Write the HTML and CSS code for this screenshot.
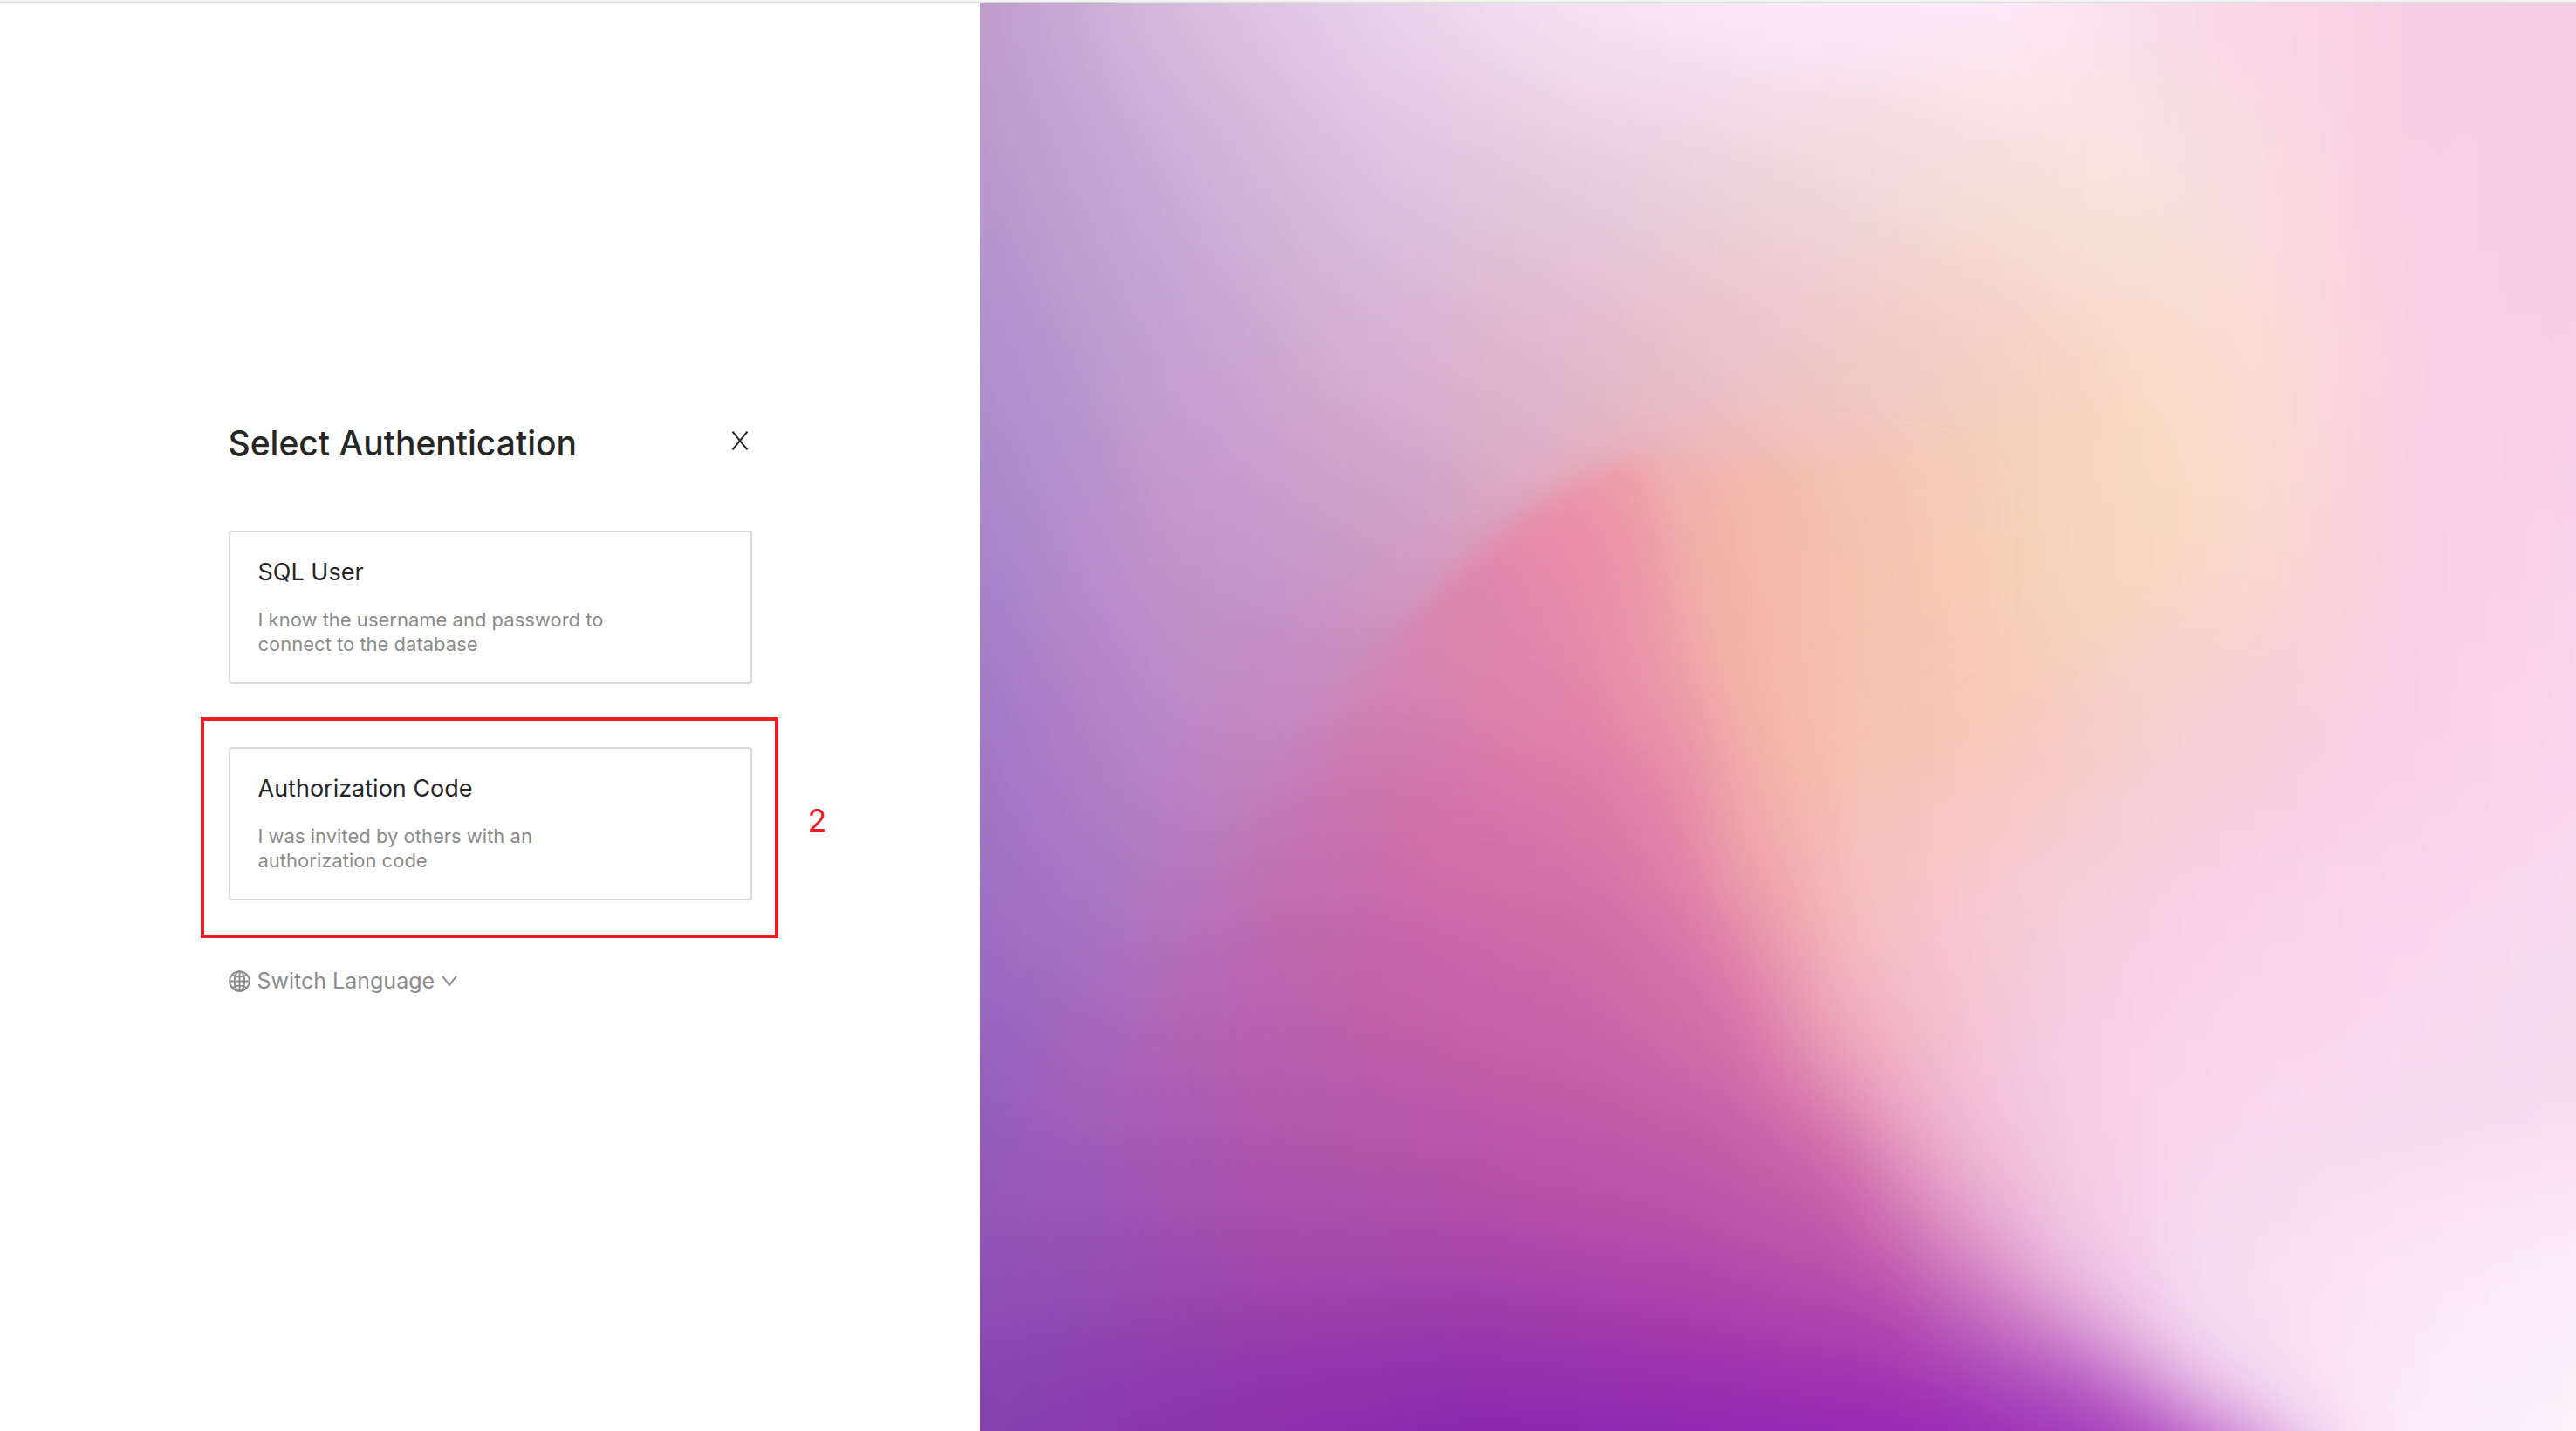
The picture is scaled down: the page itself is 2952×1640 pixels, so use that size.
FILE: index.html
```html
<!DOCTYPE html>
<html lang="en">
<head>
<meta charset="utf-8">
<title>Select Authentication</title>
<link rel="stylesheet" href="styles.css">
</head>
<body>
<div class="window-edge"></div>
<div class="page">
  <main class="panel">
    <div class="auth">
      <header class="auth-header">
        <h1 class="auth-title">Select Authentication</h1>
        <button class="close" type="button" aria-label="Close">
          <svg class="close-icon" viewBox="0 0 20 22" aria-hidden="true"><path d="M1.5 .5 18.5 21.5M18.5 .5 1.5 21.5"/></svg>
        </button>
      </header>
      <div class="options">
        <button class="card" type="button">
          <span class="card-title">SQL User</span>
          <span class="card-text">I know the username and password to connect to the database</span>
        </button>
        <div class="marked">
          <button class="card" type="button">
            <span class="card-title">Authorization Code</span>
            <span class="card-text">I was invited by others with an authorization code</span>
          </button>
          <div class="marker"></div>
          <span class="marker-label">2</span>
        </div>
      </div>
      <button class="language" type="button">
        <svg class="globe" viewBox="0 0 26 26" aria-hidden="true"><circle cx="13" cy="13" r="11.8"/><ellipse cx="13" cy="13" rx="6" ry="11.8"/><path d="M13 1v24M1 13h24M4.200 5.200Q13 10.500 21.800 5.200M4.200 20.800Q13 15.500 21.800 20.800"/></svg>
        <span>Switch Language</span>
        <svg class="chevron" viewBox="0 0 18 12" aria-hidden="true"><path d="M1 .7 9 11 17 .7"/></svg>
      </button>
    </div>
  </main>
  <aside class="artwork">
    <svg class="art" viewBox="19 4 1549 1564" preserveAspectRatio="none" aria-hidden="true">
      <defs>
        <filter id="rows" filterUnits="userSpaceOnUse" x="-300" y="-400" width="2200" height="2400" color-interpolation-filters="sRGB"><feGaussianBlur stdDeviation="20 75"/></filter>
        <filter id="petalRows" filterUnits="userSpaceOnUse" x="-300" y="-400" width="2200" height="2400" color-interpolation-filters="sRGB"><feGaussianBlur stdDeviation="15 65"/></filter>
        <filter id="crisp" filterUnits="userSpaceOnUse" x="-300" y="-400" width="2200" height="2400"><feGaussianBlur stdDeviation="15"/></filter>
        <filter id="haze" filterUnits="userSpaceOnUse" x="-300" y="-400" width="2200" height="2400"><feGaussianBlur stdDeviation="26"/></filter>
        <filter id="soft" filterUnits="userSpaceOnUse" x="-300" y="-400" width="2200" height="2400"><feGaussianBlur stdDeviation="50"/></filter>
        <linearGradient id="b0" gradientUnits="userSpaceOnUse" x1="0" x2="1600" y1="0" y2="0"><stop offset="0.01" stop-color="#c09bcb"/><stop offset="0.125" stop-color="#d5bbde"/><stop offset="0.25" stop-color="#e8d2ea"/><stop offset="0.375" stop-color="#f6e4f6"/><stop offset="0.5" stop-color="#fceafb"/><stop offset="0.64" stop-color="#fdeaf8"/><stop offset="0.75" stop-color="#f9d8e8"/><stop offset="0.9" stop-color="#f6cfe1"/><stop offset="0.98" stop-color="#f5cee6"/></linearGradient>
        <linearGradient id="b1" gradientUnits="userSpaceOnUse" x1="0" x2="1600" y1="0" y2="0"><stop offset="0.01" stop-color="#b797cc"/><stop offset="0.125" stop-color="#cbabd6"/><stop offset="0.25" stop-color="#dcc0de"/><stop offset="0.375" stop-color="#e5cbdc"/><stop offset="0.5" stop-color="#eed5da"/><stop offset="0.625" stop-color="#f6dfd9"/><stop offset="0.7" stop-color="#f9e5de"/><stop offset="0.77" stop-color="#fadfe2"/><stop offset="0.86" stop-color="#f7d1e2"/><stop offset="0.98" stop-color="#f5cee6"/></linearGradient>
        <linearGradient id="b2" gradientUnits="userSpaceOnUse" x1="0" x2="1600" y1="0" y2="0"><stop offset="0.01" stop-color="#ad8fcd"/><stop offset="0.125" stop-color="#c4a0d0"/><stop offset="0.25" stop-color="#d5b0d2"/><stop offset="0.375" stop-color="#e1b9cb"/><stop offset="0.5" stop-color="#edc5c9"/><stop offset="0.625" stop-color="#f3cfc2"/><stop offset="0.73" stop-color="#f8dbc8"/><stop offset="0.78" stop-color="#f9ddd1"/><stop offset="0.86" stop-color="#f8d3e1"/><stop offset="0.98" stop-color="#f6cfe9"/></linearGradient>
        <linearGradient id="b3" gradientUnits="userSpaceOnUse" x1="0" x2="1600" y1="0" y2="0"><stop offset="0.01" stop-color="#a784cb"/><stop offset="0.125" stop-color="#c195cb"/><stop offset="0.25" stop-color="#cc9bc6"/><stop offset="0.34" stop-color="#dba5be"/><stop offset="0.45" stop-color="#f0b0ac"/><stop offset="0.5" stop-color="#f4bbaa"/><stop offset="0.625" stop-color="#f6cfb5"/><stop offset="0.7" stop-color="#f6d9bc"/><stop offset="0.78" stop-color="#f7d9cb"/><stop offset="0.875" stop-color="#f7d0e2"/><stop offset="0.98" stop-color="#f7d2ec"/></linearGradient>
        <linearGradient id="b4" gradientUnits="userSpaceOnUse" x1="0" x2="1600" y1="0" y2="0"><stop offset="0.01" stop-color="#a078c6"/><stop offset="0.125" stop-color="#bb87c6"/><stop offset="0.24" stop-color="#c98abe"/><stop offset="0.45" stop-color="#f3a8a8"/><stop offset="0.5" stop-color="#f5bcac"/><stop offset="0.625" stop-color="#f6c9b9"/><stop offset="0.75" stop-color="#f6cfd4"/><stop offset="0.875" stop-color="#f7d0e6"/><stop offset="0.98" stop-color="#f8d5ee"/></linearGradient>
        <linearGradient id="b5" gradientUnits="userSpaceOnUse" x1="0" x2="1600" y1="0" y2="0"><stop offset="0.01" stop-color="#9c6fc4"/><stop offset="0.1" stop-color="#ac77c1"/><stop offset="0.25" stop-color="#c476b3"/><stop offset="0.49" stop-color="#f2a9ad"/><stop offset="0.54" stop-color="#f5bfc0"/><stop offset="0.625" stop-color="#f6cad4"/><stop offset="0.75" stop-color="#f7d1e6"/><stop offset="0.875" stop-color="#f8d6ef"/><stop offset="0.98" stop-color="#f8daf1"/></linearGradient>
        <linearGradient id="b6" gradientUnits="userSpaceOnUse" x1="0" x2="1600" y1="0" y2="0"><stop offset="0.01" stop-color="#945fbf"/><stop offset="0.1" stop-color="#a563b9"/><stop offset="0.3" stop-color="#c066a8"/><stop offset="0.55" stop-color="#f0adc4"/><stop offset="0.625" stop-color="#f3c4d9"/><stop offset="0.7" stop-color="#f7d2e9"/><stop offset="0.8" stop-color="#f9d8f0"/><stop offset="0.98" stop-color="#f7dcf2"/></linearGradient>
        <linearGradient id="b7" gradientUnits="userSpaceOnUse" x1="0" x2="1600" y1="0" y2="0"><stop offset="0.01" stop-color="#8c53b9"/><stop offset="0.2" stop-color="#a04aae"/><stop offset="0.5" stop-color="#c867b0"/><stop offset="0.66" stop-color="#efc0e0"/><stop offset="0.75" stop-color="#f7dcf2"/><stop offset="0.875" stop-color="#fae6f7"/><stop offset="0.98" stop-color="#fcedf9"/></linearGradient>
        <linearGradient id="b8" gradientUnits="userSpaceOnUse" x1="0" x2="1600" y1="0" y2="0"><stop offset="0.01" stop-color="#853fab"/><stop offset="0.3" stop-color="#8c26ae"/><stop offset="0.55" stop-color="#9c35b5"/><stop offset="0.75" stop-color="#f0d2ee"/><stop offset="0.82" stop-color="#f9e3f5"/><stop offset="0.9" stop-color="#fceef9"/><stop offset="0.98" stop-color="#fdf2fa"/></linearGradient>
        <linearGradient id="p0" gradientUnits="userSpaceOnUse" x1="0" x2="1600" y1="0" y2="0"><stop offset="0.3" stop-color="#e18fb0"/><stop offset="0.37" stop-color="#ec94aa"/><stop offset="0.43" stop-color="#f1a6a8"/></linearGradient>
        <linearGradient id="p1" gradientUnits="userSpaceOnUse" x1="0" x2="1600" y1="0" y2="0"><stop offset="0.25" stop-color="#d384b0"/><stop offset="0.31" stop-color="#df80aa"/><stop offset="0.38" stop-color="#e686a8"/><stop offset="0.44" stop-color="#f09da8"/></linearGradient>
        <linearGradient id="p2" gradientUnits="userSpaceOnUse" x1="0" x2="1600" y1="0" y2="0"><stop offset="0.18" stop-color="#c272b0"/><stop offset="0.28" stop-color="#d071a9"/><stop offset="0.38" stop-color="#da76a7"/><stop offset="0.44" stop-color="#e384a8"/><stop offset="0.475" stop-color="#ee9ca8"/></linearGradient>
        <linearGradient id="p3" gradientUnits="userSpaceOnUse" x1="0" x2="1600" y1="0" y2="0"><stop offset="0.1" stop-color="#b067b6"/><stop offset="0.25" stop-color="#c161a9"/><stop offset="0.38" stop-color="#ca67a7"/><stop offset="0.47" stop-color="#d872a8"/><stop offset="0.53" stop-color="#e890ac"/></linearGradient>
        <linearGradient id="p4" gradientUnits="userSpaceOnUse" x1="0" x2="1600" y1="0" y2="0"><stop offset="0.05" stop-color="#985aba"/><stop offset="0.19" stop-color="#ac53ab"/><stop offset="0.31" stop-color="#b552a8"/><stop offset="0.44" stop-color="#bd57a8"/><stop offset="0.53" stop-color="#c962a8"/><stop offset="0.6" stop-color="#dd88b8"/></linearGradient>
        <linearGradient id="p5" gradientUnits="userSpaceOnUse" x1="0" x2="1600" y1="0" y2="0"><stop offset="0.01" stop-color="#8a4db6"/><stop offset="0.16" stop-color="#9741ac"/><stop offset="0.31" stop-color="#9c3aab"/><stop offset="0.44" stop-color="#a73dac"/><stop offset="0.56" stop-color="#b348ae"/><stop offset="0.64" stop-color="#c670c0"/></linearGradient>
        <linearGradient id="p6" gradientUnits="userSpaceOnUse" x1="0" x2="1600" y1="0" y2="0"><stop offset="0.01" stop-color="#8440ab"/><stop offset="0.16" stop-color="#892fac"/><stop offset="0.31" stop-color="#8924ae"/><stop offset="0.5" stop-color="#8e24b2"/><stop offset="0.6" stop-color="#9325b5"/><stop offset="0.75" stop-color="#a93fbe"/></linearGradient>
        <linearGradient id="fadeDown" gradientUnits="userSpaceOnUse" x1="0" x2="0" y1="600" y2="960"><stop offset="0" stop-color="#fff"/><stop offset="1" stop-color="#000"/></linearGradient>
        <linearGradient id="fadeUp" gradientUnits="userSpaceOnUse" x1="0" x2="0" y1="600" y2="900"><stop offset="0" stop-color="#000"/><stop offset="1" stop-color="#fff"/></linearGradient>
        <linearGradient id="peach" gradientUnits="userSpaceOnUse" x1="620" x2="1000" y1="0" y2="0"><stop offset="0" stop-color="#f2a6a6"/><stop offset=".4" stop-color="#f3b9a9"/><stop offset="1" stop-color="#f6ceb4" stop-opacity="0"/></linearGradient>
        <path id="petal" d="M-100 1500C120 1240 270 980 375 780C460 630 550 530 665 502C688 560 690 660 712 760C735 900 778 1040 840 1160C920 1310 1040 1470 1280 1600L1400 1900H-300V1560Z"/>
        <mask id="crispMask" maskUnits="userSpaceOnUse" x="-300" y="-400" width="2200" height="2400"><g filter="url(#crisp)"><use href="#petal" fill="url(#fadeDown)"/></g></mask>
        <mask id="softMask" maskUnits="userSpaceOnUse" x="-300" y="-400" width="2200" height="2400"><g filter="url(#soft)"><use href="#petal" fill="url(#fadeUp)"/></g></mask>
        <g id="petalFill" filter="url(#petalRows)">
          <rect x="-300" y="300" width="2200" height="300" fill="url(#p0)"/>
          <rect x="-300" y="600" width="2200" height="200" fill="url(#p1)"/>
          <rect x="-300" y="800" width="2200" height="200" fill="url(#p2)"/>
          <rect x="-300" y="1000" width="2200" height="200" fill="url(#p3)"/>
          <rect x="-300" y="1200" width="2200" height="180" fill="url(#p4)"/>
          <rect x="-300" y="1380" width="2200" height="130" fill="url(#p5)"/>
          <rect x="-300" y="1510" width="2200" height="490" fill="url(#p6)"/>
        </g>
      </defs>
      <g filter="url(#rows)">
        <rect x="-300" y="-400" width="2200" height="500" fill="url(#b0)"/>
        <rect x="-300" y="100" width="2200" height="200" fill="url(#b1)"/>
        <rect x="-300" y="300" width="2200" height="200" fill="url(#b2)"/>
        <rect x="-300" y="500" width="2200" height="200" fill="url(#b3)"/>
        <rect x="-300" y="700" width="2200" height="200" fill="url(#b4)"/>
        <rect x="-300" y="900" width="2200" height="200" fill="url(#b5)"/>
        <rect x="-300" y="1100" width="2200" height="200" fill="url(#b6)"/>
        <rect x="-300" y="1300" width="2200" height="190" fill="url(#b7)"/>
        <rect x="-300" y="1490" width="2200" height="510" fill="url(#b8)"/>
      </g>
      <path d="M580 570C630 520 700 495 800 500C900 505 1000 520 1100 500V640L760 800L700 700Z" fill="url(#peach)" filter="url(#haze)" opacity=".65"/>
      <g mask="url(#softMask)"><use href="#petalFill"/></g>
      <g mask="url(#crispMask)"><use href="#petalFill"/></g>
    </svg>
  </aside>
</div>
</body>
</html>
```
FILE: styles.css
```css
* {
  box-sizing: border-box;
}

body {
  margin: 0;
  min-height: 100vh;
  display: flex;
  flex-direction: column;
  background: #fff;
  color: #262626;
  font-family: Inter, "Liberation Sans", sans-serif;
}

button {
  margin: 0;
  padding: 0;
  border: 0;
  background: none;
  color: inherit;
  font: inherit;
  text-align: left;
  cursor: pointer;
}

.window-edge {
  height: 4px;
  background: #f3f3f3;
  border-bottom: 2px solid #dadada;
}

.page {
  flex: 1;
  display: grid;
  grid-template-columns: 1123fr 1829fr;
}

.panel {
  display: flex;
  flex-direction: column;
  justify-content: center;
  align-items: center;
  padding-bottom: 16px;
}

.auth {
  width: 600px;
}

.auth-header {
  display: flex;
  justify-content: space-between;
  align-items: flex-start;
  height: 56px;
  margin-bottom: 72px;
}

.auth-title {
  margin: 0;
  font-size: 39px;
  line-height: 56px;
  font-weight: 500;
}

.close {
  display: flex;
  padding: 14px 4px;
}

.close-icon {
  width: 20px;
  height: 22px;
}

.close-icon path,
.globe,
.chevron {
  fill: none;
  stroke: currentColor;
  stroke-width: 2;
}

.options {
  display: grid;
  gap: 72px;
}

.marked {
  position: relative;
}

.card {
  display: flex;
  flex-direction: column;
  gap: 24px;
  width: 100%;
  padding: 30px 32px;
  border: 2px solid #d9d9d9;
  border-radius: 4px;
  background: #fff;
  box-shadow: 0 4px 0 rgba(0, 0, 0, 0.016);
}

.card-title {
  font-size: 27px;
  line-height: 32px;
}

.card-text {
  max-width: 440px;
  color: #8c8c8c;
  font-size: 22px;
  line-height: 28px;
}

.marker {
  position: absolute;
  inset: -34px -30px -43px -32px;
  border: 4px solid #ee1c25;
  pointer-events: none;
}

.marker-label {
  position: absolute;
  left: calc(100% + 64px);
  top: 62px;
  color: #ee1c25;
  font-size: 36px;
  line-height: 44px;
}

.language {
  display: flex;
  align-items: center;
  gap: 8px;
  height: 48px;
  margin-top: 68px;
  color: #8c8c8c;
  font-size: 25px;
  line-height: 48px;
}

.globe {
  width: 25px;
  height: 25px;
}

.chevron {
  width: 18px;
  height: 12px;
}

.artwork {
  position: relative;
  overflow: hidden;
}

.art {
  position: absolute;
  inset: 0;
  width: 100%;
  height: 100%;
}
```
